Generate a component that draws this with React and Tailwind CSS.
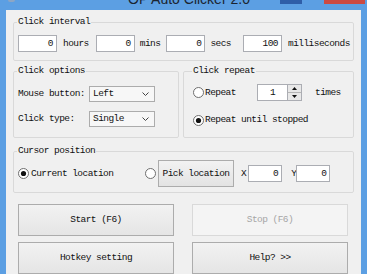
import React from "react";

const font = "font-['Liberation_Mono','DejaVu_Sans_Mono',monospace] text-[9.5px] leading-[12px] tracking-[-0.55px] text-[#111]";

function Field({ value, w = "w-[39px]", className = "" }) {
  return (
    <div className={`${w} h-[17px] shrink-0 bg-white border border-[#abadb3] flex items-center justify-end pr-[3px] ${className}`}>
      {value}
    </div>
  );
}

function Radio({ checked }) {
  return (
    <svg width="11" height="11" viewBox="0 0 11 11" className="shrink-0">
      <circle cx="5.5" cy="5.5" r="5" fill="#fff" stroke="#6f6f6f" strokeWidth="1" />
      {checked && <circle cx="5.5" cy="5.5" r="2.6" fill="#111" />}
    </svg>
  );
}

function Select({ value }) {
  return (
    <div className="w-[66px] h-[16px] shrink-0 bg-[#f7f7f7] border border-[#acacac] flex items-center pl-[3px] pr-[5px]">
      <span className="flex-1">{value}</span>
      <svg width="7" height="4" viewBox="0 0 7 4">
        <path d="M0.5 0.5 L3.5 3.5 L6.5 0.5" fill="none" stroke="#444" strokeWidth="1" />
      </svg>
    </div>
  );
}

function Group({ title, className = "", children }) {
  return (
    <fieldset className={`border border-[#d9d9d9] rounded-[2px] ${className}`}>
      <legend className="px-[1px] -ml-[1px]">{title}</legend>
      {children}
    </fieldset>
  );
}

function Button({ children, disabled }) {
  return (
    <div
      className={
        disabled
          ? "w-[156px] h-[32px] shrink-0 border border-[#d9d9d9] bg-[#f4f4f4] text-[#a6a6a6] flex items-center justify-center"
          : "w-[156px] h-[32px] shrink-0 border border-[#acacac] bg-gradient-to-b from-[#f2f2f2] to-[#e5e5e5] flex items-center justify-center"
      }
    >
      {children}
    </div>
  );
}

export default function App() {
  return (
    <div className="w-[367px] h-[274px] bg-[#5c9fe3] flex flex-col overflow-hidden">
      {/* title bar */}
      <div className="h-[10px] shrink-0 flex items-start overflow-hidden">
        <div className="ml-[8px] w-[7px] h-[2px] rounded-b-full bg-[#8da6c4]" />
        <div className="flex-1 pl-[113px] font-['Liberation_Sans',Arial,sans-serif] text-[14px] leading-[14px] -mt-[8px] text-[#1b2430] whitespace-nowrap">
          OP Auto Clicker 2.0
        </div>
        <div className="w-[22px] h-[4px] bg-[#2f5ea8]" />
        <div className="w-[22px] h-[4px]" />
        <div className="w-[41px] h-[4px] bg-[#cc4a42] mr-[2px]" />
      </div>

      {/* window body */}
      <div className={`flex-1 mx-[6px] bg-[#f0f0f0] px-[7px] flex flex-col overflow-hidden ${font}`}>
        <Group title="Click interval" className="mt-[6px] pl-[4px] pb-[8px]">
          <div className="flex items-center mt-[7px] whitespace-nowrap">
            <Field value="0" />
            <span className="ml-[6px]">hours</span>
            <Field value="0" className="ml-[7px]" />
            <span className="ml-[5px]">mins</span>
            <Field value="0" className="ml-[6px]" />
            <span className="ml-[5px]">secs</span>
            <Field value="100" className="ml-[12px]" />
            <span className="ml-[6px]">milliseconds</span>
          </div>
        </Group>

        <div className="flex gap-[4px] mt-[4px]">
          <Group title="Click options" className="w-[166px] shrink-0 pl-[4px] pb-[10px]">
            <div className="flex items-center mt-[9px]">
              <span className="w-[71px] shrink-0">Mouse button:</span>
              <Select value="Left" />
            </div>
            <div className="flex items-center mt-[9px]">
              <span className="w-[71px] shrink-0">Click type:</span>
              <Select value="Single" />
            </div>
          </Group>

          <Group title="Click repeat" className="flex-1 pl-[9px]">
            <div className="flex items-center mt-[7px]">
              <div className="w-[64px] shrink-0 flex items-center gap-[1px]">
                <Radio />
                <span>Repeat</span>
              </div>
              <div className="w-[31px] h-[17px] shrink-0 bg-white border border-[#abadb3] flex items-center justify-center">1</div>
              <div className="w-[14px] h-[17px] shrink-0 flex flex-col border-y border-r border-[#abadb3] bg-white">
                <div className="flex-1 bg-[#e8e8e8] border-b border-[#b5b5b5] flex items-center justify-center">
                  <svg width="5" height="3" viewBox="0 0 5 3"><path d="M0 3 L2.5 0 L5 3 Z" fill="#111" /></svg>
                </div>
                <div className="flex-1 bg-[#e8e8e8] flex items-center justify-center">
                  <svg width="5" height="3" viewBox="0 0 5 3"><path d="M0 0 L2.5 3 L5 0 Z" fill="#111" /></svg>
                </div>
              </div>
              <span className="ml-[13px]">times</span>
            </div>
            <div className="flex items-center gap-[1px] mt-[13px]">
              <Radio checked />
              <span>Repeat until stopped</span>
            </div>
          </Group>
        </div>

        <Group title="Cursor position" className="mt-[7px] pl-[4px] pb-[5px]">
          <div className="flex items-center mt-[3px] whitespace-nowrap">
            <div className="w-[127px] shrink-0 flex items-center gap-[2px]">
              <Radio checked />
              <span>Current location</span>
            </div>
            <Radio />
            <div className="ml-[2px] w-[76px] h-[27px] shrink-0 border border-[#acacac] bg-gradient-to-b from-[#f2f2f2] to-[#e3e3e3] flex items-center justify-center">
              Pick location
            </div>
            <span className="ml-[7px]">X</span>
            <Field value="0" w="w-[34px]" className="ml-[2px]" />
            <span className="ml-[9px]">Y</span>
            <Field value="0" w="w-[34px]" />
          </div>
        </Group>

        <div className="flex flex-col gap-[6px] mt-[11px] pl-[5px]">
          <div className="flex gap-[18px]">
            <Button>Start (F6)</Button>
            <Button disabled>Stop (F6)</Button>
          </div>
          <div className="flex gap-[18px]">
            <Button>Hotkey setting</Button>
            <Button>Help? &gt;&gt;</Button>
          </div>
        </div>
      </div>
    </div>
  );
}
